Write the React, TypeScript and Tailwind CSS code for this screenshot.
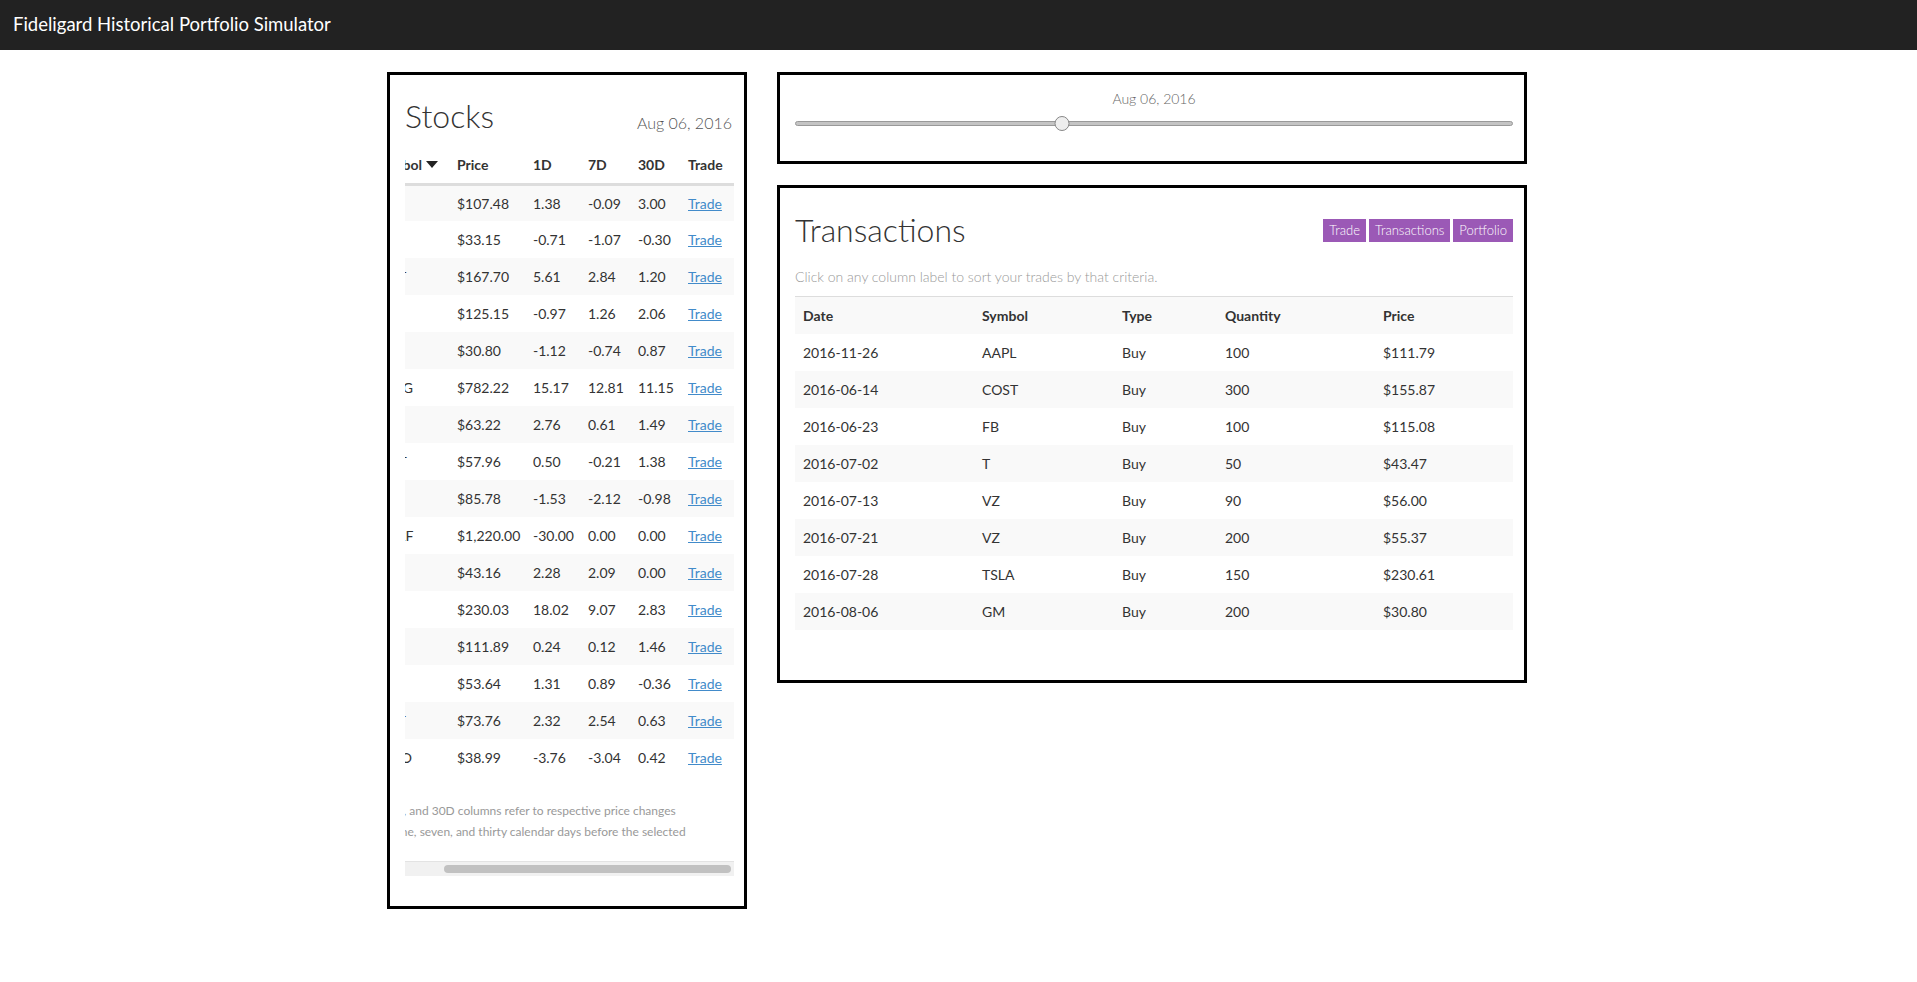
import React from "react"

// Stocks list as of the selected date (symbol, price, 1D, 7D, 30D)
const stocks: [string, string, string, string, string][] = [
  ["AAPL", "$107.48", "1.38", "-0.09", "3.00"],
  ["BBY", "$33.15", "-0.71", "-1.07", "-0.30"],
  ["COST", "$167.70", "5.61", "2.84", "1.20"],
  ["FB", "$125.15", "-0.97", "1.26", "2.06"],
  ["GM", "$30.80", "-1.12", "-0.74", "0.87"],
  ["GOOG", "$782.22", "15.17", "12.81", "11.15"],
  ["JPM", "$63.22", "2.76", "0.61", "1.49"],
  ["MSFT", "$57.96", "0.50", "-0.21", "1.38"],
  ["PG", "$85.78", "-1.53", "-2.12", "-0.98"],
  ["SPDRF", "$1,220.00", "-30.00", "0.00", "0.00"],
  ["T", "$43.16", "2.28", "2.09", "0.00"],
  ["TSLA", "$230.03", "18.02", "9.07", "2.83"],
  ["UPS", "$111.89", "0.24", "0.12", "1.46"],
  ["VZ", "$53.64", "1.31", "0.89", "-0.36"],
  ["WMT", "$73.76", "2.32", "2.54", "0.63"],
  ["YHOO", "$38.99", "-3.76", "-3.04", "0.42"],
]

const transactions: [string, string, string, string, string][] = [
  ["2016-11-26", "AAPL", "Buy", "100", "$111.79"],
  ["2016-06-14", "COST", "Buy", "300", "$155.87"],
  ["2016-06-23", "FB", "Buy", "100", "$115.08"],
  ["2016-07-02", "T", "Buy", "50", "$43.47"],
  ["2016-07-13", "VZ", "Buy", "90", "$56.00"],
  ["2016-07-21", "VZ", "Buy", "200", "$55.37"],
  ["2016-07-28", "TSLA", "Buy", "150", "$230.61"],
  ["2016-08-06", "GM", "Buy", "200", "$30.80"],
]

function StocksPanel() {
  return (
    <div className="w-[360px] border-[3px] border-black px-[15px] pt-[25px] pb-[30px]">
      <div className="flex items-end justify-between">
        <h2 className="text-[32px] font-light leading-[32px] text-[#333]">Stocks</h2>
        <span className="mr-[-3px] mb-[-3px] text-[16px] font-light leading-[24px] text-[#555]">Aug 06, 2016</span>
      </div>

      {/* horizontally scrolled table, symbol column partly out of view */}
      <div className="mt-[15px] w-[329px] overflow-hidden">
        <div className="ml-[-43px] w-[372px]">
          <table className="w-[372px] table-fixed border-collapse text-[14px] text-[#333]">
            <thead>
              <tr className="h-[37px] border-b-[3px] border-[#ddd]">
                <th className="w-[87px] pl-[14px] text-left font-bold whitespace-nowrap">
                  <span className="inline-flex items-center">
                    Symbol
                    <svg width="12" height="8" viewBox="0 0 12 8" className="ml-[4px]">
                      <path d="M0 0 L12 0 L6 7 Z" fill="#222" />
                    </svg>
                  </span>
                </th>
                <th className="w-[76px] px-2 text-left font-bold">Price</th>
                <th className="w-[55px] px-2 text-left font-bold">1D</th>
                <th className="w-[50px] px-2 text-left font-bold">7D</th>
                <th className="w-[50px] px-2 text-left font-bold">30D</th>
                <th className="w-[54px] px-2 text-left font-bold">Trade</th>
              </tr>
            </thead>
            <tbody>
              {stocks.map((s, i) => (
                <tr key={s[0]} className={i % 2 === 0 ? "h-[37px] bg-[#f9f9f9]" : "h-[37px] bg-white"}>
                  <td className="px-2 whitespace-nowrap">{s[0]}</td>
                  <td className="px-2 whitespace-nowrap">{s[1]}</td>
                  <td className="px-2 whitespace-nowrap">{s[2]}</td>
                  <td className="px-2 whitespace-nowrap">{s[3]}</td>
                  <td className="px-2 whitespace-nowrap">{s[4]}</td>
                  <td className="px-2">
                    <a href="#" className="text-[#428bca] underline">Trade</a>
                  </td>
                </tr>
              ))}
            </tbody>
          </table>
          <div className="mt-[24px] text-[12px] leading-[21px] text-[#999] whitespace-nowrap">
            <div className="ml-[-19px]">The 1D, 7D, and 30D columns refer to respective price changes</div>
            <div className="ml-[32px]">one, seven, and thirty calendar days before the selected</div>
          </div>
        </div>
        <div className="mt-[19px] flex h-[15px] items-center border-t border-[#e3e3e3] bg-[#f1f1f1]">
          <div className="ml-[39px] h-[8px] w-[287px] rounded-full bg-[#c1c1c1]" />
        </div>
      </div>
    </div>
  )
}

function DateSlider() {
  const pos = 0.372
  return (
    <div className="border-[3px] border-black pl-[15px] pr-[11px] pt-[14px] pb-[35px]">
      <div className="text-center text-[14px] font-light leading-[20px] text-[#666]">Aug 06, 2016</div>
      <div className="relative mt-[12px] h-[5px] rounded-full border border-[#999] bg-[#c4c4c4]">
        <div
          className="absolute top-[-6px] h-[15px] w-[15px] -translate-x-1/2 rounded-full border border-[#888] bg-[#eee]"
          style={{ left: `${pos * 100}%` }}
        />
      </div>
    </div>
  )
}

function TransactionsPanel() {
  return (
    <div className="mt-[21px] border-[3px] border-black pl-[15px] pr-[11px] pt-[26px] pb-[50px]">
      <div className="flex items-center justify-between">
        <h2 className="text-[32px] font-light leading-[32px] text-[#333]">Transactions</h2>
        <div className="flex gap-[3px] text-[13px] font-light leading-[23px] text-white">
          <button className="h-[23px] bg-[#9b59b6] px-[6px]">Trade</button>
          <button className="h-[23px] bg-[#9b59b6] px-[6px]">Transactions</button>
          <button className="h-[23px] bg-[#9b59b6] px-[6px]">Portfolio</button>
        </div>
      </div>
      <p className="mt-[21px] text-[14px] font-light leading-[20px] text-[#999]">
        Click on any column label to sort your trades by that criteria.
      </p>
      <table className="mt-[9px] w-full table-fixed border-collapse border-t border-[#ddd] text-[14px] text-[#333]">
        <thead>
          <tr className="h-[37px] bg-[#f9f9f9]">
            <th className="w-[179px] px-2 text-left font-bold">Date</th>
            <th className="w-[140px] px-2 text-left font-bold">Symbol</th>
            <th className="w-[103px] px-2 text-left font-bold">Type</th>
            <th className="w-[158px] px-2 text-left font-bold">Quantity</th>
            <th className="px-2 text-left font-bold">Price</th>
          </tr>
        </thead>
        <tbody>
          {transactions.map((t, i) => (
            <tr key={i} className={i % 2 === 1 ? "h-[37px] bg-[#f9f9f9]" : "h-[37px] bg-white"}>
              {t.map((c, j) => (
                <td key={j} className="px-2">{c}</td>
              ))}
            </tr>
          ))}
        </tbody>
      </table>
    </div>
  )
}

export default function App() {
  return (
    <div className="min-h-screen bg-white font-['Lato',sans-serif]">
      <header className="flex h-[50px] items-center bg-[#222] px-[13px] text-[18.5px] text-white">
        Fideligard Historical Portfolio Simulator
      </header>
      <main className="flex justify-center gap-[30px] pt-[22px] pr-[3px]">
        <StocksPanel />
        <div className="w-[750px]">
          <DateSlider />
          <TransactionsPanel />
        </div>
      </main>
    </div>
  )
}
